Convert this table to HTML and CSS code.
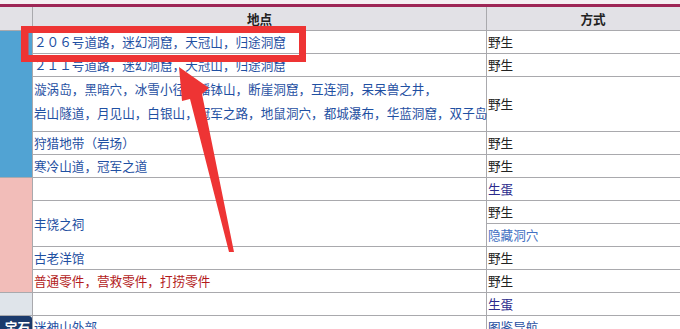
FILE: index.html
```html
<!DOCTYPE html>
<html lang="zh-CN">
<head>
    <meta charset="UTF-8">
    <meta name="viewport" content="width=device-width, initial-scale=1.0">
    <title>栖息地</title>
    <link rel="stylesheet" href="styles.css">
</head>
<body>

<div class="topbar"></div>

<table class="habitat">
    <tr>
        <th class="side"></th>
        <th class="place">地点</th>
        <th class="way">方式</th>
    </tr>
    <tr>
        <td class="side blue" rowspan="5"></td>
        <td><a class="loc">２０６号道路，迷幻洞窟，天冠山，归途洞窟</a></td>
        <td>野生</td>
    </tr>
    <tr>
        <td><a class="loc">２１１号道路，迷幻洞窟，天冠山，归途洞窟</a></td>
        <td>野生</td>
    </tr>
    <tr>
        <td class="multi"><a class="loc">漩涡岛，黑暗穴，冰雪小径，播钵山，断崖洞窟，互连洞，呆呆兽之井，</a><br><a class="loc">岩山隧道，月见山，白银山，冠军之路，地鼠洞穴，都城瀑布，华蓝洞窟，双子岛</a></td>
        <td>野生</td>
    </tr>
    <tr>
        <td><a class="loc">狩猎地带（岩场）</a></td>
        <td>野生</td>
    </tr>
    <tr>
        <td><a class="loc">寒冷山道，冠军之道</a></td>
        <td>野生</td>
    </tr>
    <tr>
        <td class="side pink" rowspan="5"></td>
        <td></td>
        <td><a class="egg">生蛋</a></td>
    </tr>
    <tr>
        <td rowspan="2"><a class="loc">丰饶之祠</a></td>
        <td>野生</td>
    </tr>
    <tr>
        <td><a class="hidden">隐藏洞穴</a></td>
    </tr>
    <tr>
        <td><a class="loc">古老洋馆</a></td>
        <td>野生</td>
    </tr>
    <tr>
        <td><a class="item">普通零件，营救零件，打捞零件</a></td>
        <td>野生</td>
    </tr>
    <tr>
        <td class="side gray"></td>
        <td></td>
        <td><a class="egg">生蛋</a></td>
    </tr>
    <tr>
        <td class="side"><span class="game">宝石</span></td>
        <td><a class="loc">迷神山外部</a></td>
        <td><a class="loc">图鉴导航</a></td>
    </tr>
</table>

<!-- 标注：红框和箭头 -->
<svg class="mark" width="680" height="329" viewBox="0 0 680 329">
    <rect x="25" y="29.5" width="277.5" height="29" fill="none" stroke="#ee3434" stroke-width="7"/>
    <rect x="21" y="26" width="6" height="36" fill="#ee3434"/>
    <polygon fill="#ee3434" points="179,67 209,88 202,94 234,252 229,252 190,99 182,101"/>
</svg>

</body>
</html>
```

FILE: styles.css
```css
body {
    font-family: "Noto Sans CJK SC", "Noto Sans", sans-serif;
    font-size: 12.6px;
    color: #222;
    background-color: white;
    margin: 0;
    padding: 0;
    overflow: hidden;
    position: relative;
    width: 680px;
    height: 329px;
}
.topbar {
    height: 4px;
    background-color: #f5eef2;
    border-bottom: 3px solid #9e2556;
}
.habitat {
    border-collapse: collapse;
    width: 700px;
    table-layout: fixed;
}
.habitat th {
    background-color: #e2e1e6;
    font-weight: bold;
    height: 23px;
    line-height: 23px;
    padding: 0;
    border: 1px solid #a9a9ad;
    border-top: none;
    text-align: center;
}
.habitat td {
    height: 22px;
    line-height: 22px;
    padding: 0 1px;
    border: 1px solid #a9a9ad;
    white-space: nowrap;
    vertical-align: middle;
}
.habitat .side {
    width: 32px;
    padding: 0;
    border-left: none;
    overflow: hidden;
}
.habitat .way {
    width: 212px;
}
.habitat td.multi {
    line-height: 24px;
    padding-bottom: 6px;
    vertical-align: top;
}
.blue { background-color: #51a3d3; }
.pink { background-color: #f2bdb9; }
.gray { background-color: #dfe4ea; }
.game {
    display: block;
    background-color: #1b3a6c;
    color: white;
    font-weight: bold;
    text-align: right;
    border-radius: 0 3px 0 0;
    padding-right: 2px;
}
.loc { color: #1f50a2; }
.egg { color: #2b2a8c; }
.hidden { color: #4170c2; }
.item { color: #b31b1b; }
.mark {
    position: absolute;
    top: 0;
    left: 0;
    pointer-events: none;
}
```
